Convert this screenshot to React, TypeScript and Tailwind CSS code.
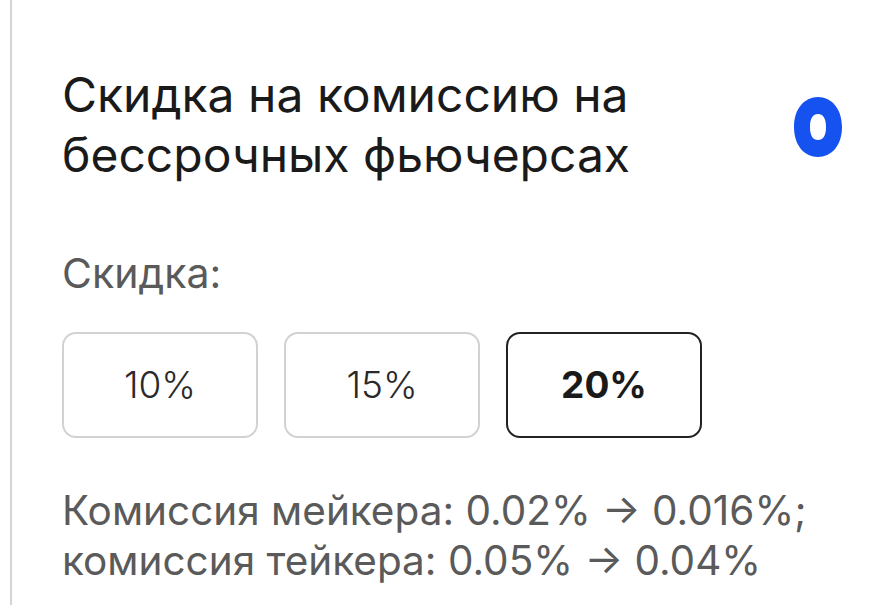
import React from "react";

const OPTIONS = ["10%", "15%", "20%"];

function CoinMark() {
  return (
    <svg width="52" height="62" viewBox="0 0 52 62" aria-hidden>
      <path
        fillRule="evenodd"
        fill="#1652f0"
        d="M26 1C39 1 50 12 50 31C50 50 39 61 26 61C13 61 2 50 2 31C2 12 13 1 26 1ZM26 18C21 18 18 22 18 31C18 40 21 44 26 44C31 44 34 40 34 31C34 22 31 18 26 18Z"
      />
    </svg>
  );
}

export default function App() {
  const selected = "20%";
  return (
    <div className="flex h-[605px] w-[887px] overflow-hidden bg-white font-['Inter',sans-serif]">
      <div className="ml-[10px] w-[2px] shrink-0 bg-[#d4d4d4]" />
      <div className="flex flex-1 flex-col pl-[50px] pr-[43px] pt-[65px]">
        <div className="flex items-start justify-between">
          <h2 className="text-[48px] leading-[60px] font-normal text-[#1a1a1a]">
            Скидка на комиссию на
            <br />
            бессрочных фьючерсах
          </h2>
          <div className="mt-[31px]">
            <CoinMark />
          </div>
        </div>
        <div className="mt-[65px] text-[41px] leading-[46px] text-[#5a5a5a]">Скидка:</div>
        <div className="mt-[36px] flex gap-[26px]">
          {OPTIONS.map((opt) => (
            <div
              key={opt}
              className={
                opt === selected
                  ? "flex h-[106px] w-[196px] items-center justify-center rounded-[14px] border-2 border-[#222] text-[37px] font-bold text-[#1a1a1a]"
                  : "flex h-[106px] w-[196px] items-center justify-center rounded-[14px] border-2 border-[#d2d2d2] text-[37px] font-light text-[#2a2a2a]"
              }
            >
              {opt}
            </div>
          ))}
        </div>
        <p className="mt-[48px] text-[40.5px] leading-[50px] text-[#5a5a5a]">
          Комиссия мейкера: 0.02% → 0.016%;
          <br />
          комиссия тейкера: 0.05% → 0.04%
        </p>
      </div>
    </div>
  );
}
